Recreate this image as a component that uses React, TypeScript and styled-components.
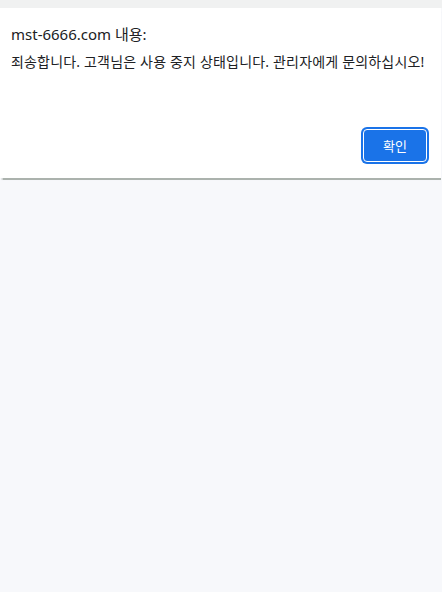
import React from 'react'
import styled, { createGlobalStyle } from 'styled-components'

const GlobalStyle = createGlobalStyle`
  html, body {
    margin: 0;
    padding: 0;
    background: #f7f8fb;
    font-family: "Noto Sans", "Noto Sans CJK KR", sans-serif;
  }
`

const Page = styled.div`
  width: 442px;
  height: 592px;
  display: flex;
  flex-direction: column;
  background: #f7f8fb;
`

const TopStrip = styled.div`
  height: 8px;
  background: #f0f1f1;
`

const Dialog = styled.div`
  width: 441px;
  height: 170px;
  box-sizing: border-box;
  background: #ffffff;
  padding: 15px 11px 16px 11px;
  display: flex;
  flex-direction: column;
  box-shadow: 0 2px 1px -0.5px rgba(110, 120, 110, 0.55);
`

const Title = styled.div`
  font-size: 15px;
  line-height: 22px;
  color: #202124;
`

const Message = styled.div`
  margin-top: 7px;
  font-size: 14px;
  line-height: 20px;
  color: #202124;
  letter-spacing: 0.18px;
  white-space: nowrap;
`

const Actions = styled.div`
  margin-top: auto;
  display: flex;
  justify-content: flex-end;
  padding-right: 3px;
`

const OkButton = styled.button`
  width: 64px;
  height: 33px;
  border-radius: 4px;
  border: 1px solid #ffffff;
  background: #1a73e8;
  color: #ffffff;
  font-family: "Noto Sans CJK KR", "Noto Sans", sans-serif;
  font-size: 13px;
  box-shadow: 0 0 0 2px #1a73e8;
  cursor: pointer;
`

export default function App() {
  return (
    <>
      <GlobalStyle />
      <Page>
        <TopStrip />
        <Dialog>
          <Title>mst-6666.com 내용:</Title>
          <Message>죄송합니다. 고객님은 사용 중지 상태입니다. 관리자에게 문의하십시오!</Message>
          <Actions>
            <OkButton>확인</OkButton>
          </Actions>
        </Dialog>
      </Page>
    </>
  )
}
